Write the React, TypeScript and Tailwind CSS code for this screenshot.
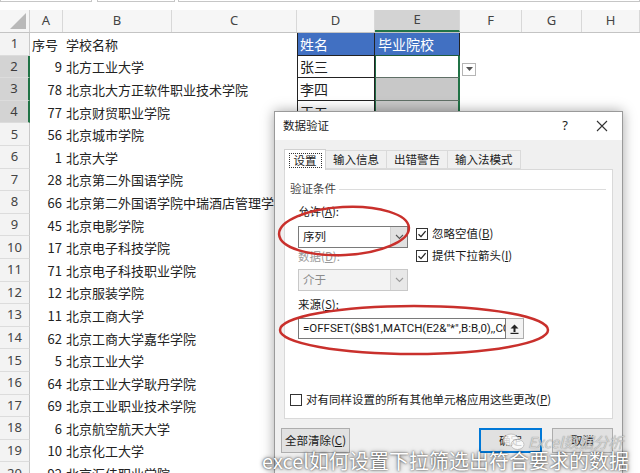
import React from "react";

const rows: [string, string][] = [
  ["9", "北方工业大学"],
  ["78", "北京北大方正软件职业技术学院"],
  ["77", "北京财贸职业学院"],
  ["56", "北京城市学院"],
  ["1", "北京大学"],
  ["28", "北京第二外国语学院"],
  ["66", "北京第二外国语学院中瑞酒店管理学院"],
  ["45", "北京电影学院"],
  ["17", "北京电子科技学院"],
  ["71", "北京电子科技职业学院"],
  ["12", "北京服装学院"],
  ["11", "北京工商大学"],
  ["62", "北京工商大学嘉华学院"],
  ["5", "北京工业大学"],
  ["64", "北京工业大学耿丹学院"],
  ["69", "北京工业职业技术学院"],
  ["6", "北京航空航天大学"],
  ["10", "北京化工大学"],
  ["92", "北京汇佳职业学院"],
];

const names: Record<number, string> = { 2: "张三", 3: "李四", 4: "王五" };

const GRID = "grid grid-cols-[30px_33px_109px_125px_78px_85px_62px_60px_58px]";
const CJK = "font-['Noto_Sans_CJK_SC','Noto_Sans',sans-serif]";

function RowHead({ n }: { n: number }) {
  const sel = n >= 2 && n <= 4;
  return (
    <div
      className={
        "flex items-center justify-center border-b border-[#dcdcdc] text-[13px] font-['Noto_Sans',sans-serif] " +
        (sel
          ? "bg-[#d3d3d3] text-[#3d3d3d] border-r-2 border-r-[#217346]"
          : "bg-[#f3f3f3] text-[#444] border-r border-r-[#c8c8c8]")
      }
    >
      {n}
    </div>
  );
}

function Check({ checked }: { checked: boolean }) {
  return (
    <span className="w-[12px] h-[12px] border border-[#333] bg-white flex items-center justify-center shrink-0">
      {checked && (
        <svg width="10" height="10" viewBox="0 0 10 10">
          <path d="M1.5 5.2 L4 7.6 L8.6 2.2" stroke="#222" strokeWidth="1.3" fill="none" />
        </svg>
      )}
    </span>
  );
}

function Chevron({ color = "#555" }: { color?: string }) {
  return (
    <svg width="9" height="6" viewBox="0 0 9 6">
      <path d="M1 1 L4.5 4.5 L8 1" stroke={color} strokeWidth="1.1" fill="none" />
    </svg>
  );
}

export default function App() {
  return (
    <div className={"relative w-[640px] h-[473px] overflow-hidden bg-white " + CJK}>
      {/* formula bar remnants */}
      <div className="h-[10px] flex bg-white">
        <div className="w-[92px] h-[2px] border border-t-0 border-[#c6c6c6]" />
        <div className="w-[5px]" />
        <div className="w-[78px] h-[2px] border border-t-0 border-[#c6c6c6]" />
        <div className="w-[3px]" />
        <div className="flex-1 h-[2px] border border-t-0 border-[#c6c6c6]" />
      </div>
      {/* column header */}
      <div className={GRID + " h-[23px] bg-[#f6f6f6] border-b border-[#c4c4c4] text-[13px] text-[#444] font-['Noto_Sans',sans-serif]"}>
        <div className="relative border-r border-[#d0d0d0]">
          <svg className="absolute right-[3px] bottom-[3px]" width="16" height="16" viewBox="0 0 16 16">
            <path d="M16 0 L16 16 L0 16 Z" fill="#b9b9b9" />
          </svg>
        </div>
        {["A", "B", "C", "D", "E", "F", "G", "H"].map((c) => (
          <div
            key={c}
            className={
              "flex items-center justify-center border-r border-[#d8d8d8] " +
              (c === "E" ? "bg-[#d3d3d3] border-b-2 border-b-[#217346]" : "")
            }
          >
            {c}
          </div>
        ))}
      </div>
      {/* rows */}
      {Array.from({ length: 20 }, (_, i) => i + 1).map((n) => {
        const data = n === 1 ? ["序号", "学校名称"] : rows[n - 2];
        return (
          <div key={n} className={GRID + " h-[22.6px] text-[13px] text-[#222] leading-none"}>
            <RowHead n={n} />
            <div className={"flex items-center whitespace-nowrap " + (n === 1 ? "pl-[2px]" : "justify-end pr-[1px]")}>
              {data[0]}
            </div>
            <div className="col-span-2 flex items-center pl-[3px] whitespace-nowrap overflow-hidden">{data[1]}</div>
            {n === 1 ? (
              <>
                <div className="flex items-center pl-[2px] bg-[#4170c2] text-white text-[14px] border-l border-r border-[#222] border-b border-b-[#222]">姓名</div>
                <div className="flex items-center pl-[3px] bg-[#4170c2] text-white text-[14px] border-r border-[#222] border-b border-b-[#1f5a3a]">毕业院校</div>
              </>
            ) : n <= 4 ? (
              <>
                <div className="flex items-center pl-[2px] bg-white text-[14px] border-l border-r border-b border-[#222]">{names[n]}</div>
                <div
                  className={
                    "relative border-l border-l-[#1d6b43] border-r-2 border-r-[#217346] border-b border-b-[#5f6f66] " +
                    (n === 2 ? "bg-white" : "bg-[#c8c8c8]")
                  }
                >
                  {n === 2 && (
                    <div className="absolute left-[86px] top-[7px] w-[14px] h-[13px] bg-white border border-[#b5b5b5] flex items-center justify-center">
                      <svg width="7" height="4" viewBox="0 0 7 4">
                        <path d="M0 0 L7 0 L3.5 4 Z" fill="#555" />
                      </svg>
                    </div>
                  )}
                </div>
              </>
            ) : (
              <>
                <div />
                <div />
              </>
            )}
            <div />
            <div />
            <div />
          </div>
        );
      })}

      {/* dialog */}
      <div className="absolute left-[274px] top-[111px] w-[349px] h-[380px] bg-[#f0f0f0] border border-[#9a9a9a] shadow-[0_0_12px_rgba(0,0,0,0.35)] text-[11.5px] text-[#1a1a1a]">
        <div className="h-[28px] bg-white flex items-center pl-[8px] pr-[14px]">
          <span className="flex-1">数据验证</span>
          <span className="text-[13px] font-['Noto_Sans',sans-serif] mr-[28px]">?</span>
          <svg width="12" height="12" viewBox="0 0 12 12">
            <path d="M1 1 L11 11 M11 1 L1 11" stroke="#333" strokeWidth="1.1" />
          </svg>
        </div>
        <div className="px-[9px] pt-[9px]">
          {/* tabs */}
          <div className="flex h-[20px] items-end">
            <div className="h-[21px] w-[42px] bg-white border border-b-0 border-[#d0d0d0] flex items-center justify-center relative z-10 mb-[-1px]">
              <span className="border border-dotted border-[#333] px-[4px] leading-[13px]">设置</span>
            </div>
            <div className="h-[19px] px-[7px] border border-l-0 border-[#dadada] bg-[#f0f0f0] flex items-center">输入信息</div>
            <div className="h-[19px] px-[7px] border border-l-0 border-[#dadada] bg-[#f0f0f0] flex items-center">出错警告</div>
            <div className="h-[19px] px-[7px] border border-l-0 border-[#dadada] bg-[#f0f0f0] flex items-center">输入法模式</div>
          </div>
          {/* panel */}
          <div className="h-[250px] bg-white border border-[#d9d9d9] flex flex-col pl-[5px] pr-[6px]">
            <div className="flex items-center mt-[12px] h-[14px]">
              <span className="text-[#444]">验证条件</span>
              <span className="flex-1 h-px bg-[#dcdcdc] ml-[3px]" />
            </div>
            <div className="pl-[8px] flex flex-col">
              <div className="mt-[9px] h-[14px] flex items-center">
                允许(<span className="underline">A</span>):
              </div>
              <div className="flex mt-[7px]">
                <div className="flex flex-col">
                  <div className="w-[110px] h-[22px] border border-[#7a7a7a] bg-white flex">
                    <span className="flex-1 flex items-center pl-[4px]">序列</span>
                    <span className="w-[17px] bg-[#e1e1e1] border-l border-[#d0d0d0] flex items-center justify-center">
                      <Chevron />
                    </span>
                  </div>
                  <div className="mt-[2px] h-[14px] flex items-center text-[#9a9a9a]">
                    数据(<span className="underline">D</span>):
                  </div>
                  <div className="mt-[5px] w-[110px] h-[22px] border border-[#c8c8c8] bg-[#f3f3f3] flex text-[#8c8c8c]">
                    <span className="flex-1 flex items-center pl-[4px]">介于</span>
                    <span className="w-[17px] bg-[#e8e8e8] border-l border-[#d6d6d6] flex items-center justify-center">
                      <Chevron color="#9a9a9a" />
                    </span>
                  </div>
                </div>
                <div className="flex flex-col ml-[8px] mt-[1px]">
                  <div className="flex items-center gap-[4px] h-[14px]">
                    <Check checked />
                    <span>
                      忽略空值(<span className="underline">B</span>)
                    </span>
                  </div>
                  <div className="flex items-center gap-[4px] h-[14px] mt-[8px]">
                    <Check checked />
                    <span>
                      提供下拉箭头(<span className="underline">I</span>)
                    </span>
                  </div>
                </div>
              </div>
              <div className="mt-[7px] h-[14px] flex items-center">
                来源(<span className="underline">S</span>):
              </div>
              <div className="mt-[6px] flex h-[21px]">
                <div className="w-[208px] border border-[#7a7a7a] bg-white overflow-hidden whitespace-nowrap flex items-center pl-[4px] text-[11.5px] font-['Roboto','Noto_Sans',sans-serif]">
                  =OFFSET($B$1,MATCH(E2&amp;"*",B:B,0),,COUNTIF(B:B,E2&amp;"*"))
                </div>
                <div className="w-[18px] border border-l-0 border-[#adadad] bg-[#f3f3f3] flex items-center justify-center">
                  <svg width="9" height="10" viewBox="0 0 9 10">
                    <path d="M4.5 0.5 L8.5 4.5 L5.5 4.5 L5.5 8 L3.5 8 L3.5 4.5 L0.5 4.5 Z" fill="#222" />
                    <rect x="0.5" y="8.8" width="8" height="1.2" fill="#222" />
                  </svg>
                </div>
              </div>
            </div>
            <div className="mt-auto mb-[11px] flex items-center gap-[4px] h-[14px]">
              <Check checked={false} />
              <span>
                对有同样设置的所有其他单元格应用这些更改(<span className="underline">P</span>)
              </span>
            </div>
          </div>
          {/* buttons */}
          <div className="flex mt-[9px] ml-[-3px]">
            <div className="w-[70px] h-[25px] bg-[#e1e1e1] border border-[#adadad] flex items-center justify-center">
              全部清除(<span className="underline">C</span>)
            </div>
            <div className="ml-[129px] w-[64px] h-[25px] bg-[#e1e1e1] border-2 border-[#0078d7] flex items-center justify-center">
              确定
            </div>
            <div className="ml-[10px] w-[62px] h-[25px] bg-[#e1e1e1] border border-[#adadad] flex items-center justify-center">
              取消
            </div>
          </div>
        </div>
      </div>

      {/* red ellipses */}
      <svg className="absolute left-0 top-0 pointer-events-none" width="640" height="473" viewBox="0 0 640 473">
        <ellipse cx="344" cy="231" rx="65" ry="24" transform="rotate(-3 344 231)" fill="none" stroke="#c9302c" strokeWidth="2.5" />
        <ellipse cx="414" cy="330" rx="134" ry="24" fill="none" stroke="#c9302c" strokeWidth="2.5" />
      </svg>

      {/* watermark logo */}
      <div className="absolute left-[503px] top-[431px] flex items-center gap-[3px] opacity-80">
        <svg width="22" height="18" viewBox="0 0 22 18">
          <ellipse cx="8" cy="7" rx="7.5" ry="6" fill="#ffffff" stroke="#bdbdbd" strokeWidth="1" />
          <ellipse cx="14.5" cy="11.5" rx="6.5" ry="5" fill="#ffffff" stroke="#bdbdbd" strokeWidth="1" />
        </svg>
        <span className="italic text-[15px] text-[#d0d0d0] [text-shadow:0_0_1px_#666]">Excel数据分析</span>
      </div>

      {/* caption */}
      <div className="absolute left-[262px] top-[449px] whitespace-nowrap text-[20px] leading-[24px] text-white [text-shadow:0_0_2px_rgba(0,0,0,0.7),0_0_4px_rgba(0,0,0,0.5)]">
        excel如何设置下拉筛选出符合要求的数据
      </div>
    </div>
  );
}
